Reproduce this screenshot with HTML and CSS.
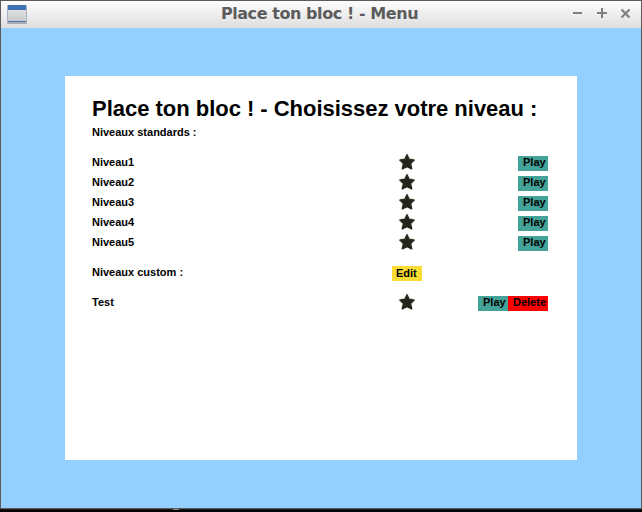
FILE: index.html
```html
<!DOCTYPE html>
<html lang="fr">
<head>
<meta charset="utf-8">
<title>Place ton bloc ! - Menu</title>
<link rel="stylesheet" href="styles.css">
</head>
<body>
<svg class="defs" width="0" height="0"><symbol id="star" viewBox="0 0 18 18"><path d="M9 1.6 11.2 6.2 16.3 7 12.7 10.7 13.8 16 9 13.8 4.2 16 5.3 10.7 1.7 7 6.8 6.2Z" fill="#24241d" stroke="#c9c9b8" stroke-width="2" stroke-linejoin="round"/><path d="M9 1.6 11.2 6.2 16.3 7 12.7 10.7 13.8 16 9 13.8 4.2 16 5.3 10.7 1.7 7 6.8 6.2Z" fill="#24241d" stroke="#24241d" stroke-width="1" stroke-linejoin="round"/></symbol></svg>
<div class="window">
  <header class="titlebar">
    <svg class="app-icon" width="20" height="20" viewBox="0 0 20 20">
      <defs><linearGradient id="pane" x2="0" y2="1"><stop stop-color="#e8e8e8"/><stop offset="1" stop-color="#c8c8c8"/></linearGradient></defs>
      <path d="M0 18h20v1H0z" fill="#aaa"/>
      <path d="M.5.5h19v17H.5z" fill="url(#pane)" stroke="#a9b3c4"/>
      <path d="M1 0h18v5H1z" fill="#3f72b5"/><path d="M1 16h18v1H1z" fill="#4a70a8"/>
    </svg>
    <h1 class="caption">Place ton bloc ! - Menu</h1>
    <svg class="controls" width="60" height="12" viewBox="0 0 60 12" fill="none" stroke="#808080" stroke-width="2">
      <path d="M1 6h9M25 6h10M30 1v10"/><path d="M49.5 2.5l8 8M57.5 2.5l-8 8" stroke-width="2.2"/>
    </svg>
  </header>
  <main class="client">
    <section class="panel">
      <h2 class="title">Place ton bloc ! - Choisissez votre niveau :</h2>
      <div class="row heading"><span>Niveaux standards :</span></div>
      <div class="row"><span>Niveau1</span><svg class="star"><use href="#star"/></svg><div class="actions"><span class="btn play">Play</span></div></div>
      <div class="row"><span>Niveau2</span><svg class="star"><use href="#star"/></svg><div class="actions"><span class="btn play">Play</span></div></div>
      <div class="row"><span>Niveau3</span><svg class="star"><use href="#star"/></svg><div class="actions"><span class="btn play">Play</span></div></div>
      <div class="row"><span>Niveau4</span><svg class="star"><use href="#star"/></svg><div class="actions"><span class="btn play">Play</span></div></div>
      <div class="row"><span>Niveau5</span><svg class="star"><use href="#star"/></svg><div class="actions"><span class="btn play">Play</span></div></div>
      <div class="row custom"><span>Niveaux custom :</span><span class="btn edit">Edit</span></div>
      <div class="row"><span>Test</span><svg class="star"><use href="#star"/></svg><div class="actions"><span class="btn play">Play</span><span class="btn delete">Delete</span></div></div>
    </section>
  </main>
</div>
<footer class="desktop"><i class="mark"></i><i class="edge"></i></footer>
</body>
</html>
```
FILE: styles.css
```css
* { box-sizing: border-box; }
body { margin: 0; height: 512px; overflow: hidden; background: #000; font-family: "Liberation Sans", Arial, sans-serif; }
.defs { display: block; }
.window { width: 642px; height: 509px; border: 1px solid #5c5a5b; }
.titlebar {
  height: 27px; display: grid; grid-template-columns: 80px 1fr 80px; align-items: center;
  padding: 0 9px 0 6px; background: linear-gradient(#fdfdfd, #dedede);
}
.app-icon { display: block; }
.caption { margin: 0 0 2px; text-align: center; color: #5c5c5c; font: bold 16px/25px "DejaVu Sans", sans-serif; letter-spacing: -.43px; white-space: nowrap; }
.controls { display: block; justify-self: end; margin-bottom: 3px; }
.client { height: 480px; display: grid; place-items: center; background: #93cfff; }
.panel { width: 512px; height: 384px; background: #fff; padding: 20px 29px 0 27px; color: #000; }
.title { margin: 0; height: 26px; font-size: 22px; line-height: 26px; font-weight: bold; letter-spacing: -.02px; white-space: nowrap; }
.row {
  height: 20px; display: grid; grid-template-columns: 300px 30px 1fr; align-items: start;
  font-size: 11px; line-height: 20px; font-weight: bold; white-space: nowrap;
}
.heading { margin-bottom: 10px; }
.custom { margin: 10px 0; }
.star { width: 18px; height: 18px; margin-top: 1px; justify-self: center; }
.actions { display: flex; justify-content: flex-end; }
.btn { width: 30px; height: 15px; margin-top: 4px; padding-left: 5px; line-height: 13px; }
.play { background: #43a398; }
.edit { background: #f8dc35; padding-left: 4px; line-height: 15px; }
.delete { width: 40px; background: #f00; }
.desktop { height: 3px; display: flex; border-top: 1px solid #291020; }
.mark { width: 6px; height: 1px; margin: -1px 0 0 173px; background: #858b91; }
.edge { flex: 1; height: 1px; margin-top: -1px; background: #051b29; }
```
